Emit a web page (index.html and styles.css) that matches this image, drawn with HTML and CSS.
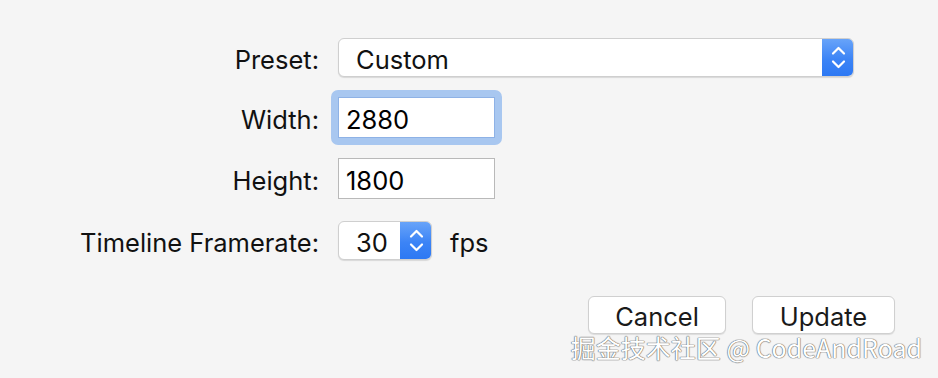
FILE: index.html
```html
<!DOCTYPE html>
<html lang="en">
<head>
    <meta charset="UTF-8">
    <title>Document Settings</title>
    <link rel="stylesheet" href="styles.css">
</head>
<body>
    <div class="sheet">
        <!-- Settings form -->
        <div class="form">
            <label class="label">Preset:</label>
            <div class="popup popup-wide">
                <span class="popup-value">Custom</span>
                <span class="popup-arrows">
                    <svg width="32" height="39" viewBox="0 0 32 39"><path d="M11 15.5 L16.5 10 L22 15.5 M11 23.5 L16.5 29 L22 23.5" fill="none" stroke="#fff" stroke-width="2.2" stroke-linecap="round" stroke-linejoin="round"/></svg>
                </span>
            </div>

            <label class="label">Width:</label>
            <div class="field focused">2880</div>

            <label class="label">Height:</label>
            <div class="field">1800</div>

            <label class="label row-rate">Timeline Framerate:</label>
            <div class="rate row-rate">
                <div class="popup popup-small">
                    <span class="popup-value">30</span>
                    <span class="popup-arrows">
                        <svg width="32" height="39" viewBox="0 0 32 39"><path d="M11 15.5 L16.5 10 L22 15.5 M11 23.5 L16.5 29 L22 23.5" fill="none" stroke="#fff" stroke-width="2.2" stroke-linecap="round" stroke-linejoin="round"/></svg>
                    </span>
                </div>
                <span class="unit">fps</span>
            </div>
        </div>

        <!-- Buttons -->
        <div class="actions">
            <button class="btn btn-cancel">Cancel</button>
            <button class="btn btn-update">Update</button>
        </div>

        <div class="watermark">掘金技术社区 @ CodeAndRoad</div>
    </div>
</body>
</html>
```

FILE: styles.css
```css
* {
    margin: 0;
    padding: 0;
    box-sizing: border-box;
}

body {
    font-family: Inter, 'Liberation Sans', sans-serif;
    background: #f5f5f5;
    color: #1a1a1a;
    width: 938px;
    height: 378px;
    overflow: hidden;
}

.sheet {
    position: relative;
    width: 938px;
    height: 378px;
    padding-top: 38px;
}

/* Form grid */
.form {
    display: grid;
    grid-template-columns: 319px max-content;
    grid-template-rows: 39px 41px 41px 39px;
    column-gap: 19px;
    row-gap: 20px;
    align-items: center;
}

.label {
    font-size: 25.5px;
    text-align: right;
    color: #111;
    white-space: nowrap;
    padding-top: 3px;
}

.row-rate {
    margin-top: 4px;
}

/* Popup buttons */
.popup {
    display: flex;
    align-items: center;
    height: 39px;
    background: #fff;
    border: 1px solid #cfcfcf;
    border-radius: 6px;
    box-shadow: 0 1px 1px rgba(0, 0, 0, 0.12);
    overflow: hidden;
}

.popup-wide {
    width: 516px;
}

.popup-small {
    width: 94px;
}

.popup-value {
    flex: 1;
    padding-left: 17px;
    padding-top: 3px;
    font-size: 25.5px;
    color: #111;
}

.popup-arrows {
    display: flex;
    width: 32px;
    height: 39px;
    margin: -1px -1px -1px 0;
    background: linear-gradient(to bottom, #6aa5f9 0%, #3c84f6 55%, #2c78f3 100%);
}

/* Text fields */
.field {
    position: relative;
    width: 157px;
    height: 41px;
    padding-left: 7px;
    padding-top: 3px;
    display: flex;
    align-items: center;
    background: #fff;
    border: 1px solid #b9b9b9;
    font-size: 25.5px;
    color: #000;
}

.field.focused {
    border-color: #8eb2e6;
}

.field.focused::before {
    content: "";
    position: absolute;
    inset: -8px;
    border-radius: 7px;
    background: #a8c7f0;
    z-index: -1;
}

.rate {
    display: flex;
    align-items: center;
    gap: 18px;
}

.unit {
    font-size: 25.5px;
    padding-top: 3px;
    color: #111;
}

/* Bottom buttons */
.actions {
    display: flex;
    justify-content: flex-end;
    gap: 26px;
    padding-right: 43px;
    margin-top: 38px;
}

.btn {
    height: 38px;
    padding-top: 2px;
    font-family: inherit;
    font-size: 25.5px;
    color: #1a1a1a;
    background: #fff;
    border: 1px solid #d0d0d0;
    border-radius: 6px;
    box-shadow: 0 1px 1px rgba(0, 0, 0, 0.1);
}

.btn-cancel {
    width: 138px;
}

.btn-update {
    width: 143px;
}

.watermark {
    position: absolute;
    right: 16px;
    bottom: 13px;
    font-family: 'Noto Sans CJK SC', sans-serif;
    font-size: 25px;
    color: #fff;
    text-shadow: 0 0 1px #666, 0 0 1px #666, 0 0 1px #666;
    white-space: nowrap;
}
```
